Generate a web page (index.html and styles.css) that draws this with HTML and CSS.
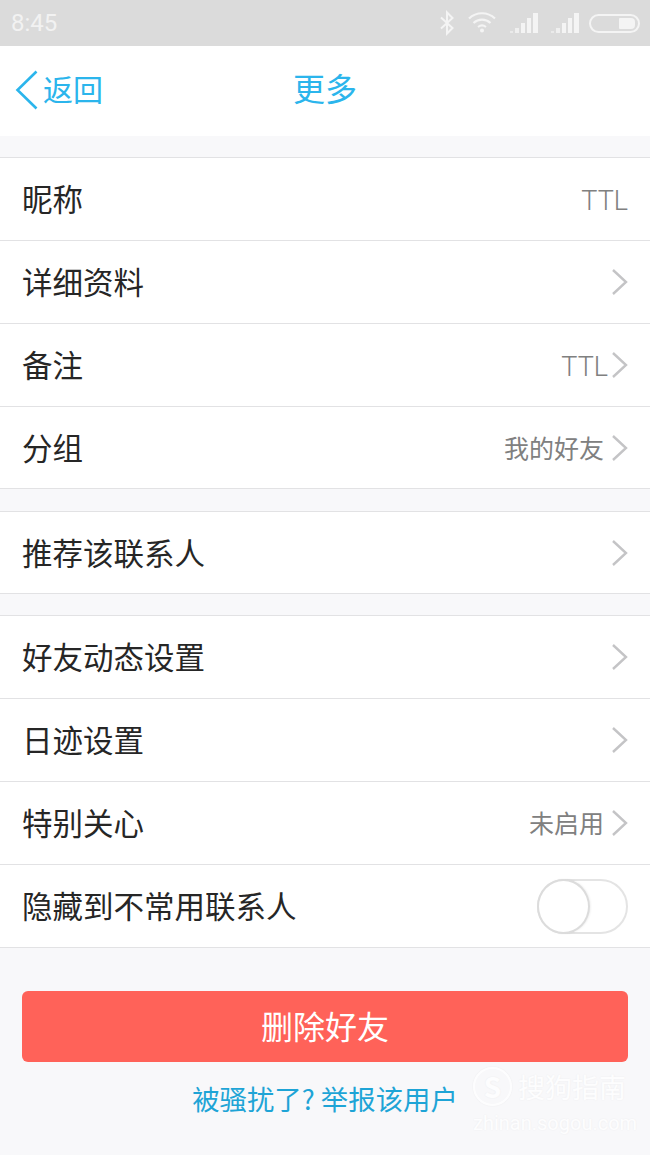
FILE: index.html
```html
<!DOCTYPE html>
<html lang="zh-CN">

<head>
    <meta charset="UTF-8">
    <meta name="viewport" content="width=device-width, initial-scale=1.0">
    <title>更多</title>
    <link rel="stylesheet" href="styles.css">
</head>

<body>
    <!-- Status bar -->
    <div class="status-bar">
        <span class="clock">8:45</span>
        <div class="status-icons">
            <svg class="icon-bt" width="16" height="26" viewBox="0 0 16 26">
                <path d="M2 7.500L13.500 18 8 23.500V2.500L13.500 8 2 18.500" fill="none" stroke="#f4f4f4" stroke-width="2" />
            </svg>
            <svg class="icon-wifi" width="30" height="24" viewBox="0 0 30 24">
                <path d="M2 9.500C9.500 2.500 20.500 2.500 28 9.500" fill="none" stroke="#f4f4f4" stroke-width="2.200" />
                <path d="M6.500 14C11.500 9.500 18.500 9.500 23.500 14" fill="none" stroke="#f4f4f4" stroke-width="2.200" />
                <path d="M11 18C13.500 16 16.500 16 19 18" fill="none" stroke="#f4f4f4" stroke-width="2" />
                <circle cx="15" cy="21.500" r="2" fill="#f4f4f4" />
            </svg>
            <svg class="icon-signal" width="28" height="20" viewBox="0 0 28 20">
                <rect x="0" y="18" width="3" height="2" fill="#f4f4f4" opacity="0.6" />
                <rect x="5" y="15" width="4" height="5" fill="#f4f4f4" opacity="0.8" />
                <rect x="11" y="10" width="4" height="10" fill="#f4f4f4" />
                <rect x="17" y="5" width="4" height="15" fill="#f4f4f4" />
                <rect x="23" y="0" width="5" height="20" fill="#f4f4f4" />
            </svg>
            <svg class="icon-signal" width="28" height="20" viewBox="0 0 28 20">
                <rect x="0" y="18" width="3" height="2" fill="#f4f4f4" opacity="0.6" />
                <rect x="5" y="15" width="4" height="5" fill="#f4f4f4" opacity="0.8" />
                <rect x="11" y="10" width="4" height="10" fill="#f4f4f4" />
                <rect x="17" y="5" width="4" height="15" fill="#f4f4f4" />
                <rect x="23" y="0" width="5" height="20" fill="#f4f4f4" />
            </svg>
            <div class="battery"><span class="battery-level"></span></div>
        </div>
    </div>

    <!-- Nav bar -->
    <header class="nav-bar">
        <div class="nav-back">
            <svg width="24" height="40" viewBox="0 0 24 40">
                <path d="M21.500 1.500L2.500 20 21.500 38.500" fill="none" stroke="#2bb5ec" stroke-width="2.600" />
            </svg>
            <span class="nav-back-text">返回</span>
        </div>
        <h1 class="nav-title">更多</h1>
    </header>

    <!-- Settings lists -->
    <main>
        <section class="group group-first">
            <div class="row">
                <span class="label">昵称</span>
                <span class="value value-plain">TTL</span>
            </div>
            <div class="row">
                <span class="label">详细资料</span>
                <svg class="chevron" width="18" height="28" viewBox="0 0 18 28"><path d="M2 2L15 14 2 26" /></svg>
            </div>
            <div class="row">
                <span class="label">备注</span>
                <span class="value value-tight">TTL</span>
                <svg class="chevron" width="18" height="28" viewBox="0 0 18 28"><path d="M2 2L15 14 2 26" /></svg>
            </div>
            <div class="row">
                <span class="label">分组</span>
                <span class="value">我的好友</span>
                <svg class="chevron" width="18" height="28" viewBox="0 0 18 28"><path d="M2 2L15 14 2 26" /></svg>
            </div>
        </section>

        <section class="group">
            <div class="row">
                <span class="label">推荐该联系人</span>
                <svg class="chevron" width="18" height="28" viewBox="0 0 18 28"><path d="M2 2L15 14 2 26" /></svg>
            </div>
        </section>

        <section class="group group-last">
            <div class="row">
                <span class="label">好友动态设置</span>
                <svg class="chevron" width="18" height="28" viewBox="0 0 18 28"><path d="M2 2L15 14 2 26" /></svg>
            </div>
            <div class="row">
                <span class="label">日迹设置</span>
                <svg class="chevron" width="18" height="28" viewBox="0 0 18 28"><path d="M2 2L15 14 2 26" /></svg>
            </div>
            <div class="row">
                <span class="label">特别关心</span>
                <span class="value">未启用</span>
                <svg class="chevron" width="18" height="28" viewBox="0 0 18 28"><path d="M2 2L15 14 2 26" /></svg>
            </div>
            <div class="row">
                <span class="label">隐藏到不常用联系人</span>
                <div class="switch"><span class="knob"></span></div>
            </div>
        </section>

        <button class="delete-btn">删除好友</button>
        <a class="report-link">被骚扰了? 举报该用户</a>
    </main>

    <!-- Watermark -->
    <div class="watermark">
        <div class="wm-top">
            <span class="wm-logo">S</span>
            <span class="wm-name">搜狗指南</span>
        </div>
        <div class="wm-url">zhinan.sogou.com</div>
    </div>
</body>

</html>
```

FILE: styles.css
```css
body {
    font-family: "Noto Sans CJK SC", "Noto Sans", sans-serif;
    background-color: #f8f8fa;
    color: #262626;
    margin: 0;
    padding: 0;
    height: 1155px;
    position: relative;
    overflow: hidden;
}

/* Status bar */
.status-bar {
    height: 46px;
    background-color: #dbdbdb;
    display: flex;
    justify-content: space-between;
    align-items: center;
    padding: 0 10px 0 11px;
}

.clock {
    font-family: "Roboto", sans-serif;
    font-size: 24px;
    color: #f2f2f2;
}

.status-icons {
    display: flex;
    align-items: center;
}

.icon-bt {
    margin-right: 12px;
}

.icon-wifi {
    margin-right: 13px;
    margin-top: -4px;
}

.icon-signal {
    margin-right: 13px;
}

.icon-signal + .battery {
    margin-left: -3px;
}

.battery {
    width: 44px;
    height: 15px;
    border: 2px solid #f4f4f4;
    border-radius: 10px;
    display: flex;
    justify-content: flex-end;
    align-items: center;
    padding-right: 3px;
}

.battery-level {
    width: 16px;
    height: 11px;
    background-color: #f4f4f4;
    border-radius: 1px 4px 4px 1px;
}

/* Nav bar */
.nav-bar {
    height: 90px;
    background-color: #fff;
    position: relative;
    display: flex;
    justify-content: center;
    align-items: center;
}

.nav-back {
    position: absolute;
    left: 15px;
    top: 24px;
    display: flex;
    align-items: center;
    gap: 4px;
    color: #2bb5ec;
    font-size: 30px;
    line-height: 40px;
}

.nav-back-text {
    margin-top: -4px;
}

.nav-title {
    margin: -8px 0 0;
    font-size: 32px;
    font-weight: normal;
    color: #2bb5ec;
    line-height: 40px;
}

/* Lists */
.group {
    background-color: #fff;
    border-top: 1px solid #e2e2e4;
    border-bottom: 1px solid #e2e2e4;
    margin-top: 21px;
}

.group-first {
    margin-bottom: 22px;
}

.row {
    height: 82px;
    display: flex;
    align-items: center;
    padding: 0 21px 0 22px;
    border-bottom: 1px solid #e2e2e4;
}

.row:last-child {
    height: 81px;
    border-bottom: none;
}

.group-last .row:last-child {
    height: 82px;
}

.label {
    font-size: 30.500px;
    line-height: 40px;
    color: #262626;
    margin-top: -2px;
    margin-right: auto;
}

.value {
    font-size: 25px;
    color: #808080;
    margin-top: -2px;
    margin-right: 7px;
}

.value-plain {
    font-family: "Roboto", sans-serif;
    font-weight: 300;
    font-size: 27px;
    margin-top: 4px;
    margin-right: 1px;
}

.value-tight {
    font-family: "Roboto", sans-serif;
    font-weight: 300;
    font-size: 27px;
    margin-top: 4px;
    margin-right: 3px;
}

.chevron path {
    fill: none;
    stroke: #c4c4c6;
    stroke-width: 2.400;
}

/* Toggle */
.switch {
    width: 87px;
    height: 51px;
    border: 2px solid #e4e4e4;
    border-radius: 28px;
    position: relative;
    background-color: #fff;
    margin-right: 1px;
}

.knob {
    position: absolute;
    left: -2px;
    top: -2px;
    width: 49px;
    height: 51px;
    border: 2px solid #dcdcdc;
    border-radius: 50%;
    background-color: #fff;
    box-shadow: 1px 0 2px rgba(0, 0, 0, 0.06);
}

/* Bottom actions */
.delete-btn {
    display: block;
    width: 606px;
    height: 71px;
    margin: 43px 22px 0;
    padding: 0 0 4px;
    background-color: #ff6259;
    color: #fff;
    border: none;
    border-radius: 6px;
    font-family: inherit;
    font-size: 32px;
}

.report-link {
    display: block;
    text-align: center;
    color: #1ea4d6;
    font-size: 27.400px;
    line-height: 38px;
    margin-top: 17px;
}

/* Watermark */
.watermark {
    position: absolute;
    left: 473px;
    top: 1067px;
    color: #fff;
    opacity: 0.8;
    text-shadow: 0 0 2px rgba(0, 0, 0, 0.06);
}

.wm-top {
    display: flex;
    align-items: center;
    gap: 6px;
}

.wm-logo {
    width: 35px;
    height: 35px;
    border: 2px solid #fff;
    border-radius: 50%;
    font-size: 28px;
    line-height: 35px;
    text-align: center;
    font-weight: bold;
    box-shadow: 0 0 2px rgba(0, 0, 0, 0.06);
}

.wm-name {
    font-size: 27px;
    line-height: 39px;
}

.wm-url {
    font-family: "Roboto", sans-serif;
    font-size: 20px;
    line-height: 28px;
    margin-top: 3px;
}
```
